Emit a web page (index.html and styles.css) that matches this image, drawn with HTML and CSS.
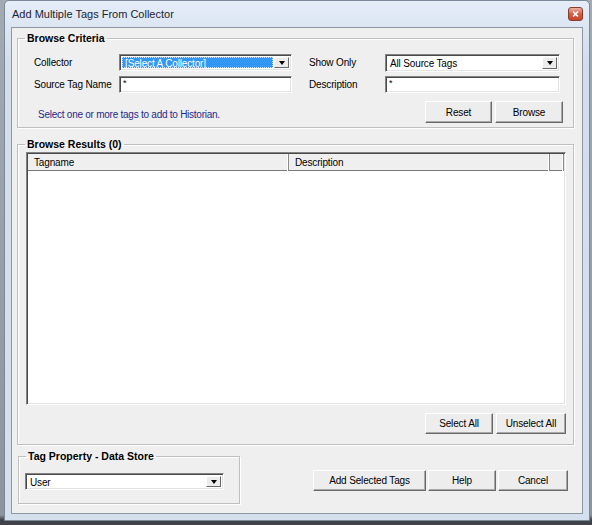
FILE: index.html
```html
<!DOCTYPE html>
<html lang="en">
<head>
    <meta charset="UTF-8">
    <title>Add Multiple Tags From Collector</title>
    <link rel="stylesheet" href="styles.css">
</head>
<body>
    <div class="window">
        <div class="titlebar">
            <span class="title">Add Multiple Tags From Collector</span>
            <span class="close">
                <svg width="7" height="6" viewBox="0 0 7 6"><path d="M1 0.5 L6 5.5 M6 0.5 L1 5.5" stroke="#fff" stroke-width="1.6"/></svg>
            </span>
        </div>

        <div class="client">
            <!-- Browse criteria -->
            <fieldset class="group">
                <legend>Browse Criteria</legend>
                <div class="criteria">
                    <div class="criteria-grid">
                        <span class="lbl">Collector</span>
                        <div class="combo">
                            <span class="value selected"><span class="focus">[Select A Collector]</span></span>
                            <span class="drop"></span>
                        </div>
                        <span></span>
                        <span class="lbl">Show Only</span>
                        <div class="combo tall">
                            <span class="value">All Source Tags</span>
                            <span class="drop"></span>
                        </div>

                        <span class="lbl">Source Tag Name</span>
                        <div class="field">*</div>
                        <span></span>
                        <span class="lbl">Description</span>
                        <div class="field">*</div>
                    </div>
                    <div class="criteria-foot">
                        <p class="hint">Select one or more tags to add to Historian.</p>
                        <div class="btn-row">
                            <button class="btn w67">Reset</button>
                            <button class="btn w68">Browse</button>
                        </div>
                    </div>
                </div>
            </fieldset>

            <!-- Results -->
            <fieldset class="group results">
                <legend>Browse Results (0)</legend>
                <div class="results-body">
                    <div class="list">
                        <div class="list-head">
                            <span>Tagname</span>
                            <span>Description</span>
                            <span></span>
                        </div>
                    </div>
                    <div class="btn-row right">
                        <button class="btn w68">Select All</button>
                        <button class="btn w70">Unselect All</button>
                    </div>
                </div>
            </fieldset>

            <div class="bottom">
                <fieldset class="group store">
                    <legend>Tag Property - Data Store</legend>
                    <div class="store-body">
                        <div class="combo store-combo">
                            <span class="value">User</span>
                            <span class="drop"></span>
                        </div>
                    </div>
                </fieldset>
                <div class="btn-row actions">
                    <button class="btn w113">Add Selected Tags</button>
                    <button class="btn w68">Help</button>
                    <button class="btn w70">Cancel</button>
                </div>
            </div>
        </div>
    </div>
</body>
</html>
```

FILE: styles.css
```css
* {
    box-sizing: border-box;
}

body {
    margin: 0;
    height: 525px;
    overflow: hidden;
    background: linear-gradient(#a4aab1, #8f949b 515px, #3f4247 520px);
    font-family: "Liberation Sans", Arial, sans-serif;
    font-size: 10px;
    letter-spacing: -0.15px;
    color: #000;
}

/* Window frame */
.window {
    margin-left: 4px;
    width: 586px;
    height: 521px;
    display: flex;
    flex-direction: column;
    background: linear-gradient(#e4edf8, #d2deed 60px, #d4e0ee);
    border: 1px solid #7b8897;
    border-radius: 5px 5px 0 0;
}

.titlebar {
    height: 26px;
    display: flex;
    align-items: center;
    padding: 0 6px 0 7px;
}

.title {
    font-size: 11px;
    letter-spacing: 0;
    color: #1c2330;
}

.close {
    margin-left: auto;
    width: 15px;
    height: 14px;
    display: flex;
    align-items: center;
    justify-content: center;
    border: 1px solid #8a3a2a;
    border-radius: 3px;
    background: linear-gradient(#eab0a2, #d45c43 50%, #c5452c);
}

.client {
    flex: 1;
    margin: 0 6px 6px 6px;
    padding: 4px 8px 0 5px;
    display: flex;
    flex-direction: column;
    background: #efefef;
    border: 1px solid #8d98a5;
}

/* Group boxes */
.group {
    margin: 0;
    padding: 0;
    min-width: 0;
    border: 1px solid #bfbfbf;
    box-shadow: 1px 1px 0 #fff, inset 1px 1px 0 #fff;
}

.group legend {
    margin-left: 7px;
    padding: 0 2px;
    font-size: 10.5px;
    line-height: 13px;
    font-weight: bold;
    letter-spacing: 0;
}

.criteria {
    padding: 9px 10px 4px 16px;
}

.criteria-grid {
    display: grid;
    grid-template-columns: 85px 173px 17px 76px 175px;
    grid-auto-rows: 17px;
    row-gap: 5px;
    align-items: center;
}

.lbl {
    line-height: 17px;
}

.criteria-foot {
    display: flex;
    align-items: center;
    margin-top: 8px;
}

.hint {
    margin: 4px 0 0 4px;
    color: #1f2a8a;
    letter-spacing: -0.25px;
}

/* Inputs */
.combo,
.field {
    height: 17px;
    display: flex;
    color: #000;
    background: #fff;
    border: 1px solid;
    border-color: #828282 #fff #fff #828282;
    box-shadow: inset 1px 1px 0 #4a4a4a, inset -1px -1px 0 #e3e3e3;
    padding: 2px;
}

.combo.tall {
    height: 18px;
}

.field {
    padding: 1px 3px;
    line-height: 11px;
    font-size: 9px;
}

.value {
    flex: 1;
    padding: 0 2px;
    line-height: 13px;
    white-space: nowrap;
}

.value.selected {
    background: #3296f5;
    color: #fff;
    padding: 0;
}

.focus {
    display: block;
    height: 100%;
    padding: 0 2px;
    border: 1px dotted #c8e2ff;
    line-height: 11px;
}

.drop {
    width: 15px;
    margin-left: 1px;
    display: flex;
    align-items: center;
    justify-content: center;
    background: #ececec;
    border: 1px solid;
    border-color: #fff #696969 #696969 #fff;
}

.drop::after {
    content: "";
    border-left: 3.5px solid transparent;
    border-right: 3.5px solid transparent;
    border-top: 4px solid #000;
    margin-top: 1px;
}

/* Buttons */
.btn-row {
    display: flex;
    gap: 3px;
    margin-left: auto;
}

.btn {
    height: 22px;
    padding: 0;
    font: inherit;
    letter-spacing: -0.15px;
    color: #000;
    background: #ededed;
    border: 1px solid;
    border-color: #fff #6a6a6a #6a6a6a #fff;
    box-shadow: inset -1px -1px 0 #a8a8a8;
}

.w67 { width: 67px; }
.w68 { width: 68px; }
.w70 { width: 70px; }
.w113 { width: 113px; }

/* Results */
.results {
    margin-top: 10px;
}

.results-body {
    padding: 1px 7px 10px 8px;
}

.list {
    height: 253px;
    background: #fff;
    border: 1px solid;
    border-color: #828282 #fff #fff #828282;
    box-shadow: inset 1px 1px 0 #4a4a4a, inset -1px -1px 0 #e3e3e3;
    padding: 1px;
}

.list-head {
    display: grid;
    grid-template-columns: 261px 261px 1fr;
    height: 17px;
    background: #efefef;
    border-bottom: 1px solid #7a7a7a;
}

.list-head span {
    padding-left: 6px;
    line-height: 17px;
    border-right: 1px solid #8a8a8a;
    box-shadow: inset -1px 0 0 #fff;
}

.btn-row.right {
    justify-content: flex-end;
    margin-top: 8px;
}

.btn-row.right .btn,
.actions .btn {
    height: 21px;
}

/* Bottom area */
.bottom {
    display: flex;
    align-items: flex-start;
    margin-top: 5px;
}

.store {
    width: 222px;
    margin-left: 1px;
}

.store-body {
    padding: 10px 15px 13px 6px;
}

.store-combo {
    height: 17px;
}

.actions {
    gap: 2px;
    margin-top: 20px;
    margin-right: 6px;
}
```
